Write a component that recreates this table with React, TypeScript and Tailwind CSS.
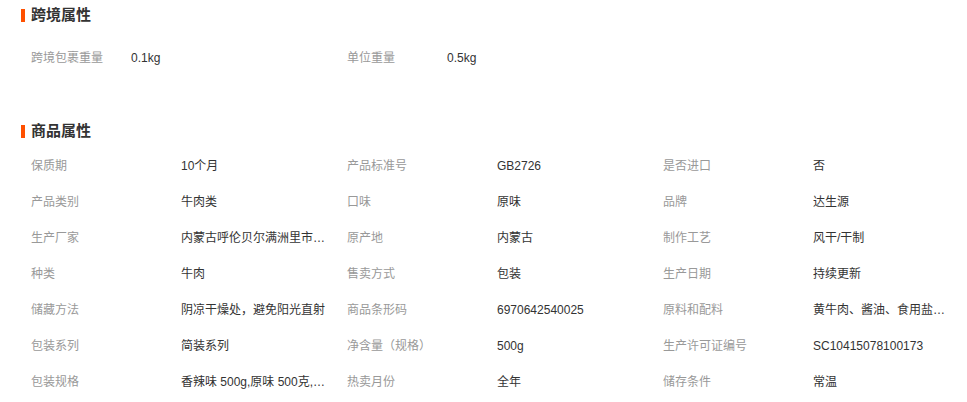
import React from "react";

const font = { fontFamily: '"Liberation Sans", Arial, "Noto Sans CJK SC", sans-serif' };

const attrs: [string, string][] = [
  ["保质期", "10个月"],
  ["产品标准号", "GB2726"],
  ["是否进口", "否"],
  ["产品类别", "牛肉类"],
  ["口味", "原味"],
  ["品牌", "达生源"],
  ["生产厂家", "内蒙古呼伦贝尔满洲里市天然肉业有限公司"],
  ["原产地", "内蒙古"],
  ["制作工艺", "风干/干制"],
  ["种类", "牛肉"],
  ["售卖方式", "包装"],
  ["生产日期", "持续更新"],
  ["储藏方法", "阴凉干燥处，避免阳光直射"],
  ["商品条形码", "6970642540025"],
  ["原料和配料", "黄牛肉、酱油、食用盐、白砂糖、香辛料"],
  ["包装系列", "简装系列"],
  ["净含量（规格）", "500g"],
  ["生产许可证编号", "SC10415078100173"],
  ["包装规格", "香辣味 500g,原味 500克,孜然味 500g"],
  ["热卖月份", "全年"],
  ["储存条件", "常温"],
];

function Title({ text }: { text: string }) {
  return (
    <div className="flex h-[28px] items-center">
      <span className="ml-[21px] mr-[6px] h-[13px] w-[4px] bg-[#ff5000]" />
      <span className="text-[15px] font-bold text-[#333]">{text}</span>
    </div>
  );
}

export default function App() {
  return (
    <div className="w-[967px] h-[402px] overflow-hidden bg-white pt-[1px] text-[12px]" style={font}>
      <Title text="跨境属性" />
      <div className="mt-[11px] flex pl-[31px]">
        <div className="flex h-[36px] w-[316px] items-center">
          <span className="w-[100px] text-[#999]">跨境包裹重量</span>
          <span className="text-[#333]">0.1kg</span>
        </div>
        <div className="flex h-[36px] w-[316px] items-center">
          <span className="w-[100px] text-[#999]">单位重量</span>
          <span className="text-[#333]">0.5kg</span>
        </div>
      </div>
      <div className="mt-[41px]">
        <Title text="商品属性" />
        <div className="mt-[3px] grid grid-cols-[316px_316px_minmax(0,1fr)] pl-[31px] pr-[12px]">
          {attrs.map(([k, v]) => (
            <div key={k} className="flex h-[36px] min-w-0 items-center">
              <span className="w-[150px] shrink-0 text-[#999]">{k}</span>
              <span className="min-w-0 max-w-[146px] flex-1 truncate text-[#333]">{v}</span>
            </div>
          ))}
        </div>
      </div>
    </div>
  );
}
